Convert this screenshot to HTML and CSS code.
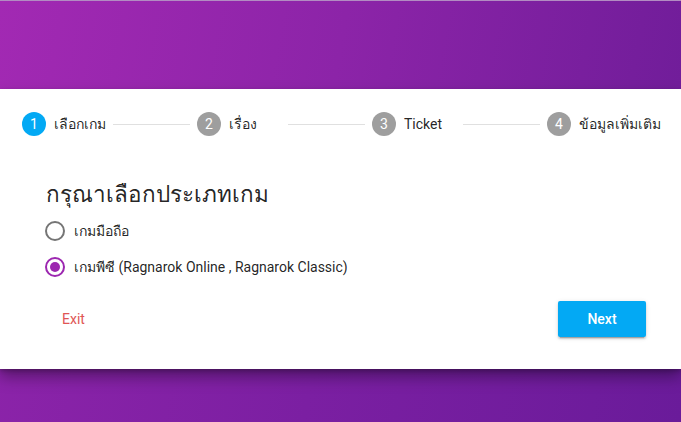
FILE: index.html
```html
<!DOCTYPE html>
<html lang="th">
<head>
<meta charset="utf-8">
<link rel="stylesheet" href="styles.css">
</head>
<body>
<div class="page">
  <div class="band-top"></div>
  <div class="card">
    <div class="stepper">
      <div class="step"><span class="num active">1</span><span class="label">เลือกเกม</span></div>
      <div class="divider"></div>
      <div class="step"><span class="num">2</span><span class="label">เรื่อง</span></div>
      <div class="divider"></div>
      <div class="step"><span class="num">3</span><span class="label">Ticket</span></div>
      <div class="divider"></div>
      <div class="step"><span class="num">4</span><span class="label">ข้อมูลเพิ่มเติม</span></div>
    </div>
    <div class="content">
      <h2 class="title">กรุณาเลือกประเภทเกม</h2>
      <label class="radio"><span class="ring"></span><span class="rlabel">เกมมือถือ</span></label>
      <label class="radio checked"><span class="ring"><span class="dot"></span></span><span class="rlabel">เกมพีซี (Ragnarok Online , Ragnarok Classic)</span></label>
      <div class="actions">
        <button class="btn-flat">Exit</button>
        <button class="btn-next">Next</button>
      </div>
    </div>
  </div>
</div>
</body>
</html>
```
FILE: styles.css
```css
html, body {
  margin: 0;
  padding: 0;
}
body {
  font-family: Roboto, "Noto Sans", "DejaVu Sans", sans-serif;
  width: 681px;
  height: 422px;
  overflow: hidden;
  background: linear-gradient(100deg, #8e24aa 0%, #7b1fa2 50%, #6a1b9a 100%);
}
.page {
  display: flex;
  flex-direction: column;
  height: 422px;
}
.band-top {
  border-top: 1px solid #b28cc2;
  background: linear-gradient(100deg, #a229b3 0%, #8c24a8 50%, #711d9a 100%);
  box-sizing: border-box;
  height: 89px;
}
.card {
  background: #fff;
  height: 280px;
  box-shadow: 0 8px 14px rgba(0,0,0,0.35), 0 2px 4px rgba(0,0,0,0.2);
  position: relative;
  z-index: 1;
}
.stepper {
  display: flex;
  align-items: center;
  height: 70px;
  padding-left: 22px;
}
.step {
  display: flex;
  align-items: center;
  gap: 8px;
  min-width: 91px;
}
.num {
  width: 24px;
  height: 24px;
  border-radius: 50%;
  background: #9e9e9e;
  color: #fff;
  font-size: 14px;
  display: flex;
  align-items: center;
  justify-content: center;
}
.num.active {
  background: #03a9f4;
}
.label {
  font-size: 14px;
  color: rgba(0,0,0,0.87);
}
.divider {
  width: 77px;
  height: 1px;
  background: #e0e0e0;
  margin-right: 7px;
}
.content {
  padding: 0 35px 0 45px;
}
.title {
  margin: 20px 0 0 1px;
  font-size: 22.5px;
  font-weight: 400;
  color: rgba(0,0,0,0.87);
  line-height: 30px;
}
.radio {
  display: flex;
  align-items: center;
  gap: 9px;
  height: 24px;
  font-size: 14px;
  color: rgba(0,0,0,0.87);
  margin-top: 10px;
}
.radio + .radio {
  margin-top: 12px;
}
.ring {
  width: 20px;
  height: 20px;
  box-sizing: border-box;
  border: 2px solid #757575;
  border-radius: 50%;
  display: flex;
  align-items: center;
  justify-content: center;
}
.checked .ring {
  border-color: #9c27b0;
}
.dot {
  width: 10px;
  height: 10px;
  border-radius: 50%;
  background: #9c27b0;
}
.actions {
  display: flex;
  justify-content: space-between;
  align-items: center;
  margin-top: 22px;
}
.btn-flat {
  background: none;
  border: none;
  font-family: Roboto, sans-serif;
  font-size: 14px;
  color: #e05555;
  padding: 0 16px;
  height: 36px;
  margin-left: 1px;
}
.btn-next {
  background: #03a9f4;
  color: #fff;
  border: none;
  border-radius: 2px;
  width: 88px;
  height: 36px;
  font-family: Roboto, sans-serif;
  font-size: 14px;
  font-weight: 500;
  box-shadow: 0 3px 1px -2px rgba(0,0,0,.2), 0 2px 2px 0 rgba(0,0,0,.14), 0 1px 5px 0 rgba(0,0,0,.12);
}
```
